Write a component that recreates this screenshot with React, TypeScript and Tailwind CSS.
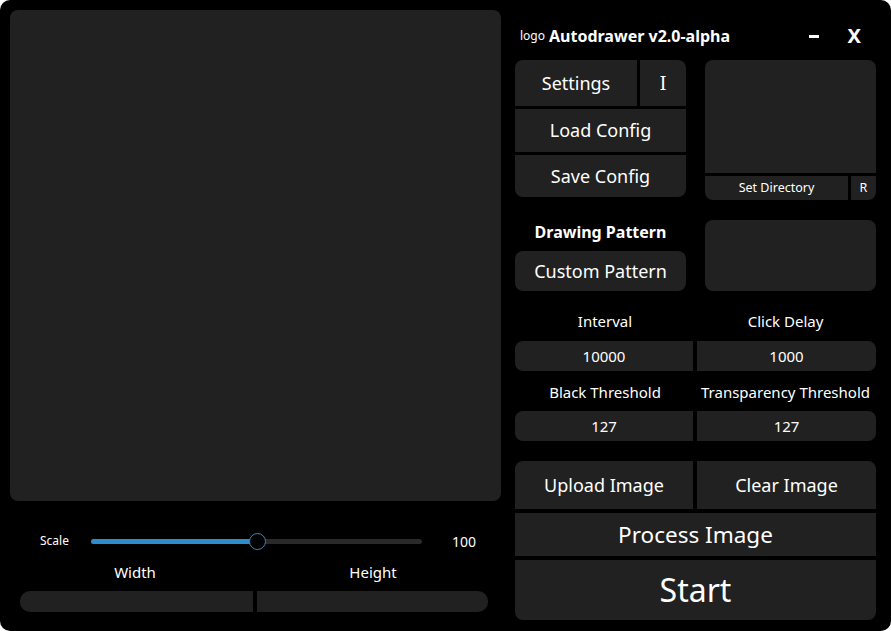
const font = { fontFamily: '"Noto Sans", "Open Sans", sans-serif' };

function Btn({ className = '', children }: { className?: string; children?: React.ReactNode }) {
  return (
    <div className={`flex items-center justify-center bg-[#212121] text-white ${className}`}>{children}</div>
  );
}

export default function App() {
  return (
    <div className="bg-white w-[891px] h-[631px]" style={font}>
      <div className="w-[891px] h-[631px] bg-black rounded-[10px] flex p-[10px] pr-[15px]">
        {/* Left: canvas + scale */}
        <div className="w-[491px] flex flex-col">
          <div className="h-[491px] bg-[#212121] rounded-lg" />
          <div className="flex items-center h-[20px] mt-[30px]">
            <span className="w-[81px] pl-[30px] text-[12px] text-white">Scale</span>
            <div className="relative w-[331px] h-[5px] rounded-full bg-[#2a2a2a]">
              <div className="absolute left-0 top-0 h-[5px] w-[162px] rounded-full bg-[#2c8ccc]" />
              <div className="absolute left-[158px] top-[-6px] w-[17px] h-[17px] rounded-full border border-[#2c8ccc] bg-black" />
            </div>
            <span className="ml-[30px] text-[14px] text-white">100</span>
          </div>
          <div className="flex mt-[10px] h-[22px] items-center text-[15px] text-white">
            <span className="w-[250px] text-center">Width</span>
            <span className="w-[226px] text-center">Height</span>
          </div>
          <div className="flex gap-[4px] mt-[8px] pl-[10px] pr-[13px] h-[21px]">
            <div className="w-[233px] bg-[#212121] rounded-l-[10px]" />
            <div className="flex-1 bg-[#212121] rounded-r-[10px]" />
          </div>
        </div>

        {/* Right panel */}
        <div className="ml-[14px] w-[361px] flex flex-col">
          <div className="h-[50px] flex items-center pt-[2px]">
            <span className="ml-[5px] text-[12px] text-white">logo</span>
            <span className="ml-[4px] text-[16px] font-bold text-white">Autodrawer v2.0-alpha</span>
            <div className="ml-auto w-[10px] h-[3px] bg-white" />
            <span className="ml-[29px] mr-[15px] text-[20px] font-bold text-white">X</span>
          </div>

          <div className="flex gap-[19px] h-[140px]">
            <div className="w-[171px] flex flex-col gap-[3px]">
              <div className="flex gap-[3px] h-[46px]">
                <Btn className="flex-1 rounded-tl-lg text-[18px]">Settings</Btn>
                <Btn className="w-[46px] rounded-tr-lg text-[18px]" >
                  <span style={{ fontFamily: '"DejaVu Serif", serif' }}>I</span>
                </Btn>
              </div>
              <Btn className="h-[43px] text-[18px]">Load Config</Btn>
              <Btn className="h-[42px] rounded-b-lg text-[18px]">Save Config</Btn>
            </div>
            <div className="w-[171px] flex flex-col gap-[3px]">
              <div className="h-[113px] bg-[#212121] rounded-t-lg" />
              <div className="flex gap-[3px] h-[24px]">
                <Btn className="flex-1 rounded-bl-lg text-[12.5px]">Set Directory</Btn>
                <Btn className="w-[25px] rounded-br-lg text-[12.5px]">R</Btn>
              </div>
            </div>
          </div>

          <div className="flex gap-[19px] h-[71px] mt-[20px]">
            <div className="w-[171px] flex flex-col">
              <div className="h-[23px] flex items-center justify-center text-[16px] font-bold text-white">Drawing Pattern</div>
              <Btn className="h-[40px] mt-[8px] rounded-lg text-[18px]">Custom Pattern</Btn>
            </div>
            <div className="w-[171px] bg-[#212121] rounded-lg" />
          </div>

          <div className="flex h-[22px] mt-[19px] items-center text-[15px] text-white">
            <span className="w-[180px] text-center">Interval</span>
            <span className="flex-1 text-center">Click Delay</span>
          </div>
          <div className="flex gap-[4px] h-[30px] mt-[9px]">
            <Btn className="w-[178px] rounded-l-lg text-[15px]">10000</Btn>
            <Btn className="flex-1 rounded-r-lg text-[15px]">1000</Btn>
          </div>
          <div className="flex h-[22px] mt-[10px] items-center text-[15px] text-white">
            <span className="w-[180px] text-center">Black Threshold</span>
            <span className="flex-1 text-center">Transparency Threshold</span>
          </div>
          <div className="flex gap-[4px] h-[30px] mt-[8px]">
            <Btn className="w-[178px] rounded-l-lg text-[15px]">127</Btn>
            <Btn className="flex-1 rounded-r-lg text-[15px]">127</Btn>
          </div>

          <div className="flex flex-col gap-[4px] mt-[20px]">
            <div className="flex gap-[4px] h-[48px]">
              <Btn className="w-[178px] rounded-tl-lg text-[18px]">Upload Image</Btn>
              <Btn className="flex-1 rounded-tr-lg text-[18px]">Clear Image</Btn>
            </div>
            <Btn className="h-[43px] text-[22.5px]">Process Image</Btn>
            <Btn className="h-[60px] rounded-b-lg text-[32px]">Start</Btn>
          </div>
        </div>
      </div>
    </div>
  );
}
